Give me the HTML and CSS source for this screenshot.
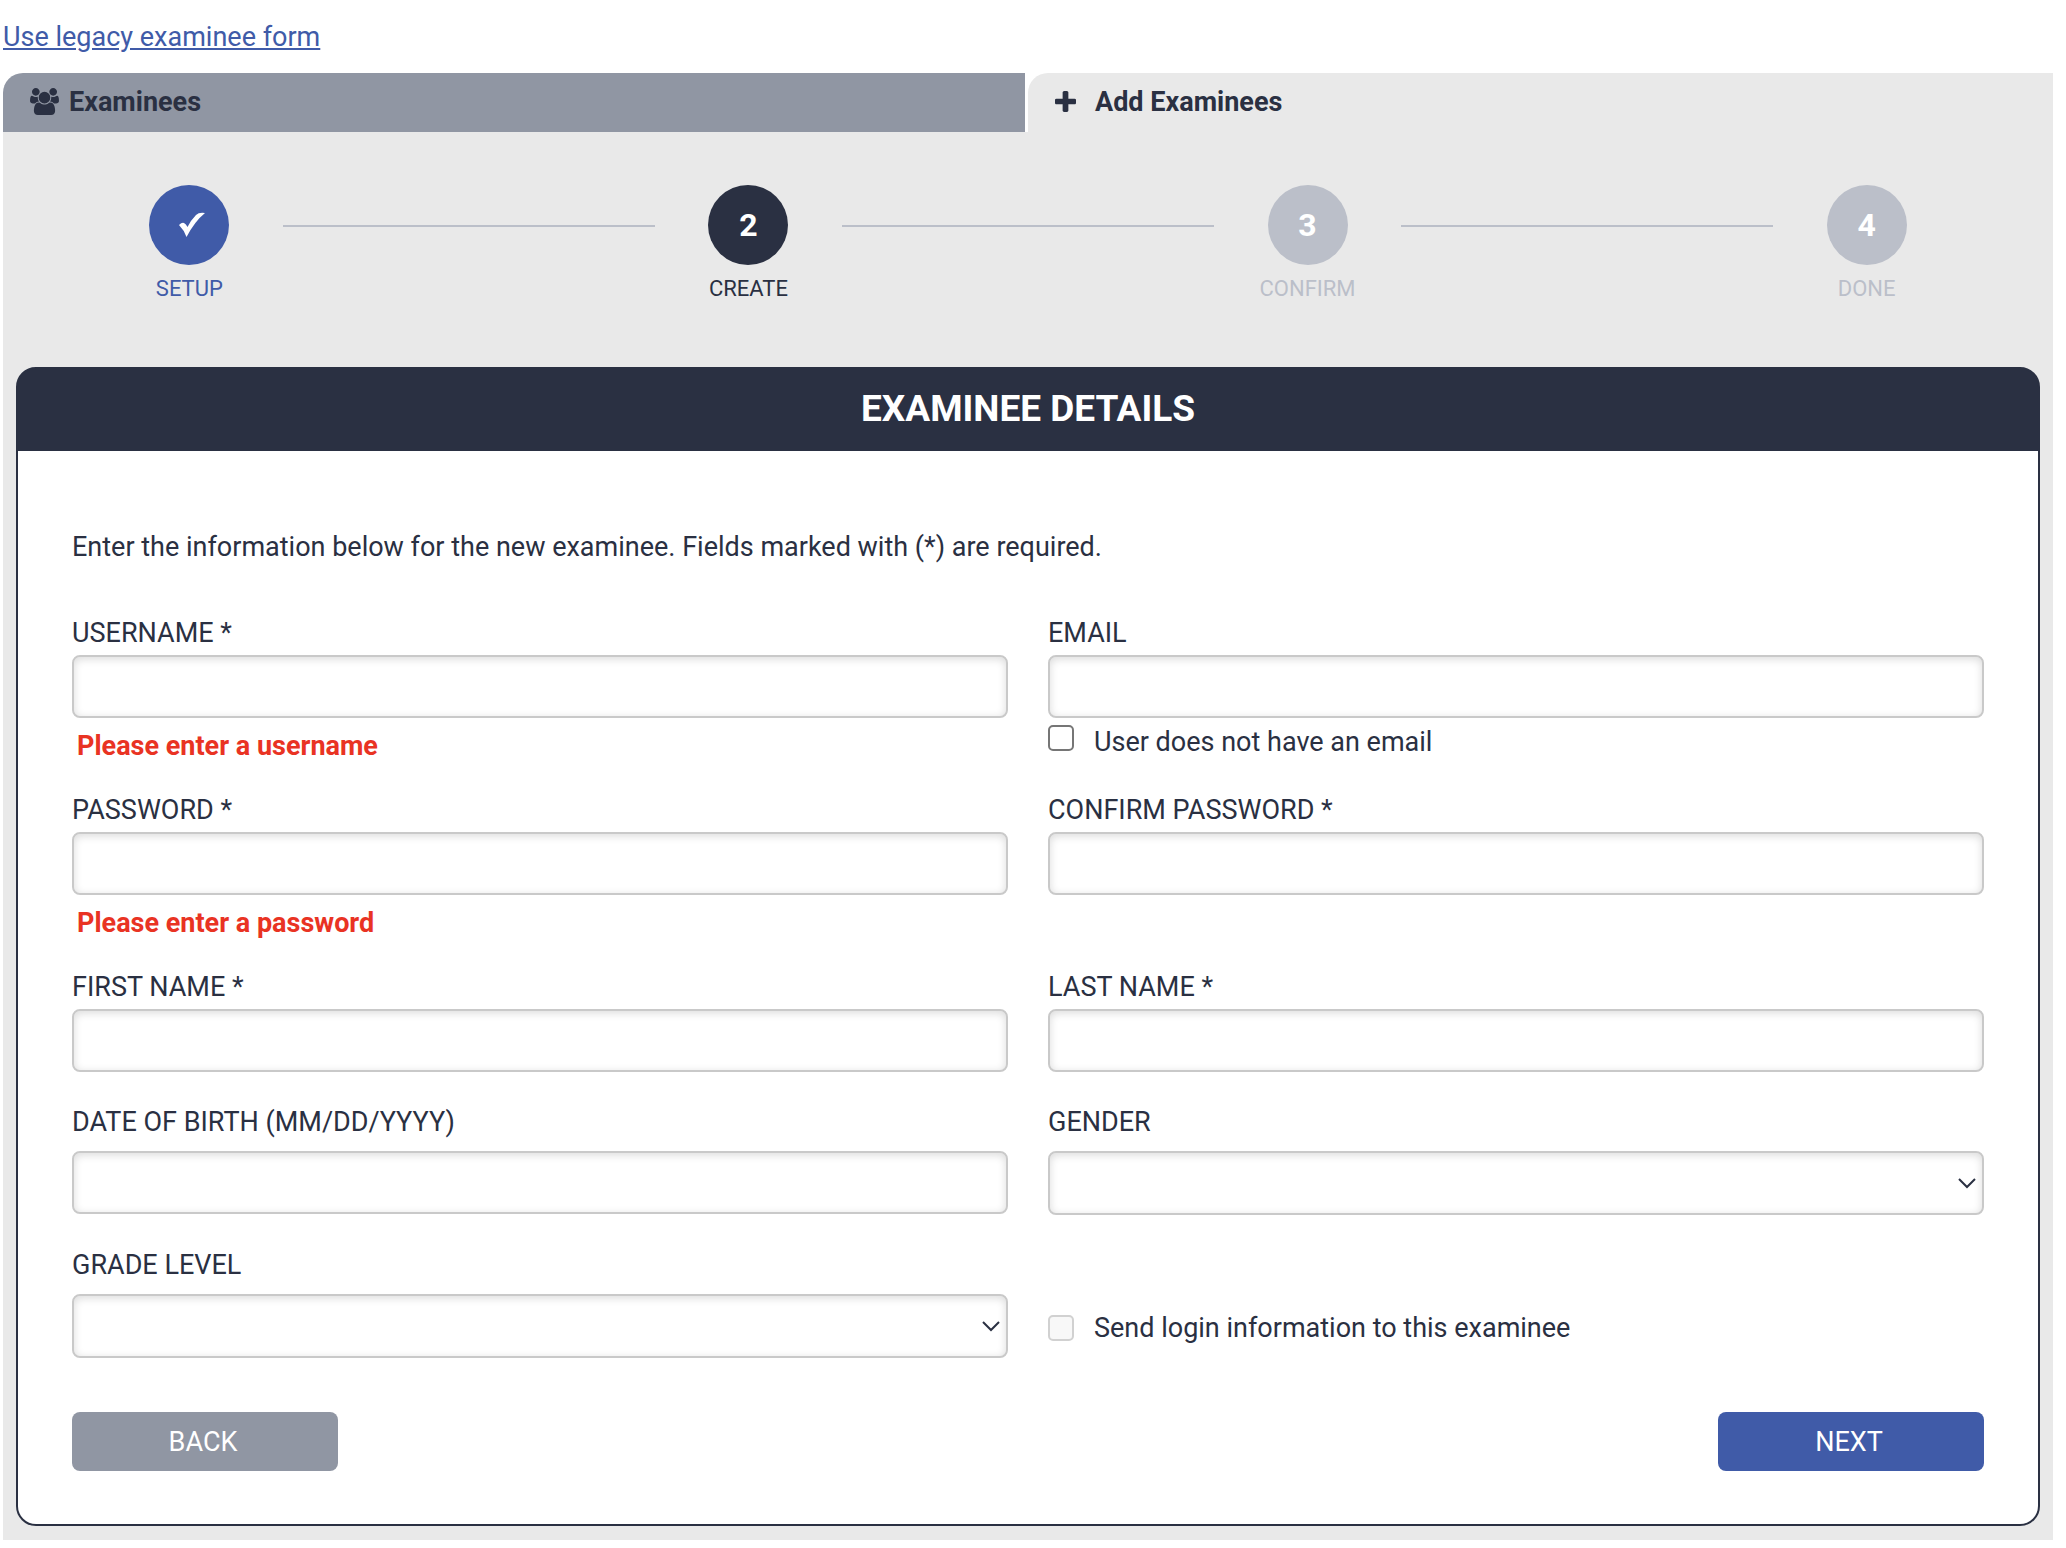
FILE: index.html
```html
<!DOCTYPE html>
<html lang="en">
<head>
    <meta charset="UTF-8">
    <title>Add Examinees</title>
    <meta name="viewport" content="width=device-width, initial-scale=1.0">
    <link rel="stylesheet" href="styles.css">
</head>
<body>

    <a class="legacy-link" href="#legacy">Use legacy examinee form</a>

    <main class="panel">
        <nav class="tabs">
            <a class="tab" href="#examinees">
                <svg class="icon-users" viewBox="0 0 1920 1792" aria-hidden="true"><path d="M593 896q-162 5-265 128H194q-82 0-138-40.500T0 865q0-353 124-353 6 0 43.500 21t97.500 42.500T384 597q67 0 133-23-5 37-5 66 0 139 81 256zm1071 637q0 120-73 189.500t-194 69.500H523q-121 0-194-69.500T256 1533q0-53 3.500-103.500t14-109T300 1212t43-97.500 62-81 85.500-53.500T602 960q10 0 43 21.500t73 48 107 48T960 1099t135-21.500 107-48 73-48 43-21.500q61 0 111.500 20t85.500 53.500 62 81 43 97.500 26.500 108.500 14 109 3.500 103.500zM640 256q0 106-75 181t-181 75-181-75-75-181 75-181T384 0t181 75 75 181zm704 384q0 159-112.500 271.500T960 1024 688.500 911.500 576 640t112.500-271.500T960 256t271.500 112.500T1344 640zm576 225q0 78-56 118.500t-138 40.500h-134q-103-123-265-128 81-117 81-256 0-29-5-66 66 23 133 23 59 0 119-21.500t97.500-42.500 43.500-21q124 0 124 353zm-128-609q0 106-75 181t-181 75-181-75-75-181 75-181 181-75 181 75 75 181z"/></svg>
                Examinees
            </a>
            <a class="tab tab-active" href="#add">
                <svg class="icon-plus" viewBox="0 128 1408 1408" aria-hidden="true"><path d="M1408 736v192q0 40-28 68t-68 28H896v416q0 40-28 68t-68 28H608q-40 0-68-28t-28-68v-416H96q-40 0-68-28T0 928V736q0-40 28-68t68-28h416V224q0-40 28-68t68-28h192q40 0 68 28t28 68v416h416q40 0 68 28t28 68z"/></svg>
                Add Examinees
            </a>
        </nav>

        <div class="steps">
            <div class="step step-done">
                <div class="step-circle">
                    <svg class="icon-check" viewBox="0 0 26 26" aria-hidden="true"><path d="M0 13 Q3 10 5 11 Q7 12 8.500 15 Q12 8 17 3 Q20 0 26 1 Q16 9 7.500 25 Q5 18 0 13z"/></svg>
                </div>
                SETUP
            </div>
            <div class="step-line"></div>
            <div class="step step-current">
                <div class="step-circle">2</div>
                CREATE
            </div>
            <div class="step-line"></div>
            <div class="step">
                <div class="step-circle">3</div>
                CONFIRM
            </div>
            <div class="step-line"></div>
            <div class="step">
                <div class="step-circle">4</div>
                DONE
            </div>
        </div>

        <form class="card">
            <h1>EXAMINEE DETAILS</h1>
            <div class="card-body">
                <p class="intro">Enter the information below for the new examinee. Fields marked with (*) are required.</p>

                <div class="fields">
                    <div class="field">
                        <label for="username">USERNAME *</label>
                        <input type="text" id="username">
                        <div class="error">Please enter a username</div>
                    </div>
                    <div class="field">
                        <label for="email">EMAIL</label>
                        <input type="email" id="email">
                        <div class="check">
                            <input type="checkbox" id="noEmail">
                            <label for="noEmail">User does not have an email</label>
                        </div>
                    </div>
                    <div class="field">
                        <label for="password">PASSWORD *</label>
                        <input type="password" id="password">
                        <div class="error">Please enter a password</div>
                    </div>
                    <div class="field">
                        <label for="confirmPassword">CONFIRM PASSWORD *</label>
                        <input type="password" id="confirmPassword">
                    </div>
                    <div class="field">
                        <label for="firstName">FIRST NAME *</label>
                        <input type="text" id="firstName">
                    </div>
                    <div class="field">
                        <label for="lastName">LAST NAME *</label>
                        <input type="text" id="lastName">
                    </div>
                    <div class="field field-spaced">
                        <label for="dob">DATE OF BIRTH (MM/DD/YYYY)</label>
                        <input type="text" id="dob">
                    </div>
                    <div class="field field-spaced">
                        <label for="gender">GENDER</label>
                        <select id="gender"><option></option></select>
                    </div>
                    <div class="field field-spaced">
                        <label for="grade">GRADE LEVEL</label>
                        <select id="grade"><option></option></select>
                    </div>
                    <div class="check check-alone">
                        <input type="checkbox" id="sendLogin" disabled>
                        <label for="sendLogin">Send login information to this examinee</label>
                    </div>
                </div>

                <div class="buttons">
                    <button type="button" class="btn btn-back">BACK</button>
                    <button type="button" class="btn btn-next">NEXT</button>
                </div>
            </div>
        </form>
    </main>

</body>
</html>
```
FILE: styles.css
```css
* {
    box-sizing: border-box;
}

body {
    margin: 0;
    padding: 19px 13px 8px 3px;
    font-family: Roboto, sans-serif;
    font-size: 27px;
    line-height: 36px;
    color: #2a3042;
    background-color: #fff;
}

.legacy-link {
    display: block;
    margin-bottom: 18px;
    color: #405ba8;
}

.panel {
    background-color: #e9e9e9;
    padding-bottom: 14px;
}

/* tabs */
.tabs {
    display: grid;
    grid-template-columns: 1fr 1fr;
    background-color: #fff;
}

.tab {
    display: flex;
    align-items: center;
    gap: 10px;
    height: 59px;
    margin-right: 3px;
    padding: 0 27px 2px;
    border-top-left-radius: 20px;
    background-color: #9096a3;
    color: #2a3042;
    font-weight: bold;
    text-decoration: none;
}

.tab-active {
    gap: 19px;
    margin-right: 0;
    background-color: #e9e9e9;
}

.tab svg {
    fill: #2a3042;
}

.icon-users {
    width: 29px;
    height: 27px;
}

.icon-plus {
    width: 21px;
    height: 21px;
}

/* progress steps */
.steps {
    display: grid;
    grid-template-columns: 1fr 2fr 1fr 2fr 1fr 2fr 1fr;
    padding: 53px calc(100% / 22) 60px;
}

.step {
    display: flex;
    flex-direction: column;
    align-items: center;
    gap: 6px;
    color: #bbbfc9;
    font-size: 22px;
}

.step-circle {
    display: flex;
    align-items: center;
    justify-content: center;
    width: 80px;
    height: 80px;
    border-radius: 50%;
    background-color: #bbbfc9;
    color: #fff;
    font-size: 32px;
    font-weight: bold;
}

.step-done {
    color: #405ba8;
}

.step-done .step-circle {
    background-color: #405ba8;
}

.step-current {
    color: #2a3042;
}

.step-current .step-circle {
    background-color: #2a3042;
}

.step-line {
    height: 2px;
    margin-top: 40px;
    background-color: #bbbfc9;
}

.icon-check {
    width: 26px;
    height: 26px;
    margin-left: 6px;
    fill: #fff;
}

/* form card */
.card {
    margin: 0 13px;
    border: 2px solid #2a3042;
    border-radius: 20px;
    background-color: #2a3042;
}

h1 {
    margin: 0;
    height: 82px;
    line-height: 80px;
    color: #fff;
    font-size: 37px;
    text-align: center;
}

.card-body {
    padding: 78px 54px 53px;
    border-radius: 0 0 18px 18px;
    background-color: #fff;
}

.intro {
    margin: 0 0 50px;
}

.fields {
    display: grid;
    grid-template-columns: 1fr 1fr;
    gap: 32px 40px;
}

.field > label {
    display: block;
    margin-bottom: 4px;
}

.field-spaced > label {
    margin-bottom: 11px;
}

.field > input,
.field > select {
    display: block;
    width: 100%;
    height: 63px;
    padding: 0 16px;
    border: 2px solid #c9c9c9;
    border-radius: 8px;
    background-color: #fff;
    box-shadow: inset 0 2px 8px rgba(0,0,0,0.15);
    color: #2a3042;
    font-family: inherit;
    font-size: 27px;
}

.field > select {
    height: 64px;
    appearance: none;
    background-image: url("data:image/svg+xml,%3Csvg xmlns='http://www.w3.org/2000/svg' viewBox='0 0 18 11'%3E%3Cpath d='M1 1l8 8 8-8' fill='none' stroke='%232a3042' stroke-width='2'/%3E%3C/svg%3E");
    background-repeat: no-repeat;
    background-position: right 6px center;
    background-size: 18px 11px;
}

.error {
    margin-top: 14px;
    padding-left: 5px;
    line-height: 28px;
    color: #e93323;
    font-weight: bold;
}

.check {
    display: flex;
    align-items: flex-start;
    gap: 20px;
    margin-top: 7px;
    line-height: 34px;
}

.check input {
    width: 26px;
    height: 26px;
    margin: 0;
    appearance: none;
    border: 2px solid #767676;
    border-radius: 5px;
    background-color: #fff;
}

.check input:disabled {
    border-color: #d1d1d1;
    background-color: #f8f8f8;
}

.check-alone {
    align-self: end;
    align-items: center;
    height: 60px;
    margin: 0;
}

/* buttons */
.buttons {
    display: flex;
    justify-content: space-between;
    margin-top: 54px;
}

.btn {
    width: 266px;
    height: 59px;
    padding: 0 4px 0 0;
    border: none;
    border-radius: 8px;
    color: #fff;
    font-family: inherit;
    font-size: 27px;
    cursor: pointer;
}

.btn-back {
    background-color: #9096a3;
}

.btn-next {
    background-color: #405ba8;
}
```
